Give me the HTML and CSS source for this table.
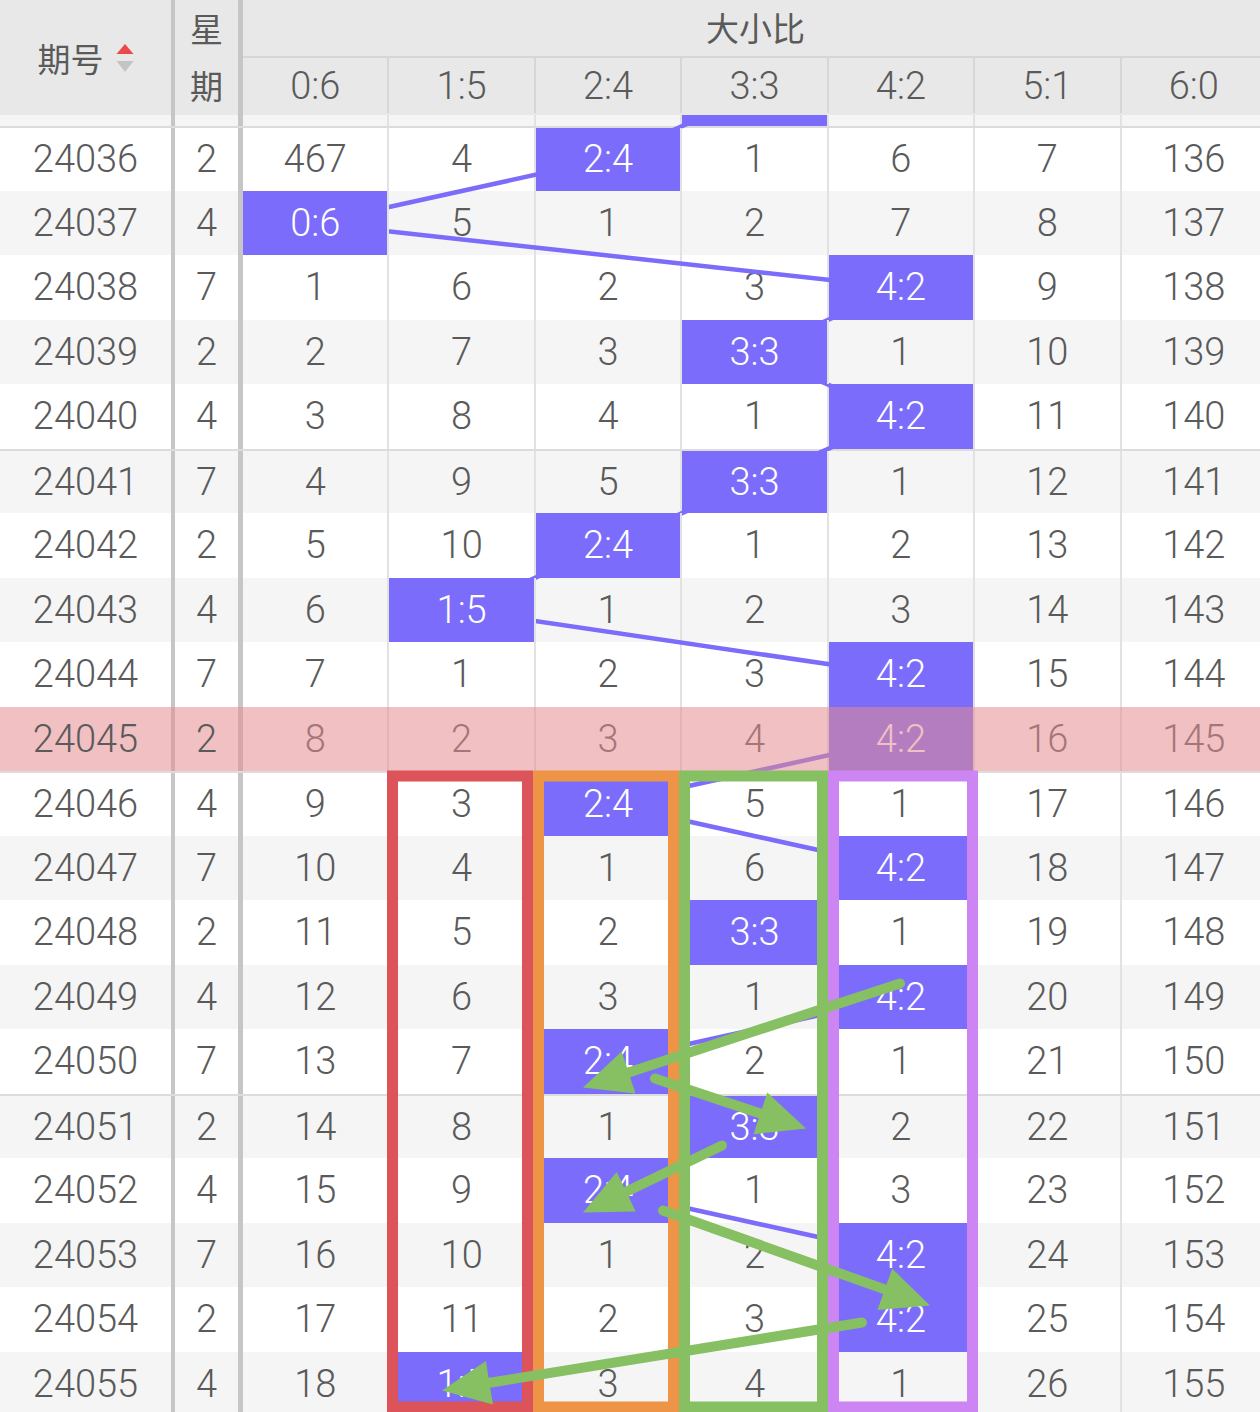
FILE: index.html
```html
<!DOCTYPE html>
<html lang="zh-CN">
<head>
<meta charset="utf-8">
<title>大小比走势</title>
<link rel="stylesheet" href="styles.css">
</head>
<body>
<div class="table">
  <div class="thead">
    <div class="h-qh">
      <span>期号</span>
      <svg class="sort" width="18" height="30" viewBox="0 0 18 30"><polygon points="9,0 17.5,10 0.5,10" fill="#ec4a4a"/><polygon points="0.5,17 17.5,17 9,28" fill="#c4c4c4"/></svg>
    </div>
    <div class="h-xq"><span>星</span><span>期</span></div>
    <div class="h-data">
      <div class="h-group">大小比</div>
      <div class="h-cols">
        <div>0:6</div><div>1:5</div><div>2:4</div><div>3:3</div><div>4:2</div><div>5:1</div><div>6:0</div>
      </div>
    </div>
  </div>
  <div class="tbody">
    <div class="rows">
      <svg class="lines" width="1268" height="1354.5" viewBox="0 61.5 1268 1354.5">
        <polyline fill="none" stroke="#7b6cfb" stroke-width="4.5" stroke-linejoin="round" points="754.5,93.75 608.1,158.25 315.2,222.75 900.9,287.25 754.5,351.75 900.9,416.25 754.5,480.75 608.1,545.25 461.6,609.75 900.9,674.25 900.9,738.75 608.1,803.25 900.9,867.75 754.5,932.25 900.9,996.75 608.1,1061.25 754.5,1125.75 608.1,1190.25 900.9,1254.75 900.9,1319.25 461.6,1383.75"/>
      </svg>

      <div class="row alt"><div class="c qh"></div><div class="c xq"></div><div class="c d"></div><div class="c d"></div><div class="c d"></div><div class="c d hit"></div><div class="c d"></div><div class="c d"></div><div class="c d"></div></div>
      <div class="row grp"><div class="c qh"><span>24036</span></div><div class="c xq"><span>2</span></div><div class="c d">467</div><div class="c d">4</div><div class="c d hit">2:4</div><div class="c d">1</div><div class="c d">6</div><div class="c d">7</div><div class="c d">136</div></div>
      <div class="row alt"><div class="c qh"><span>24037</span></div><div class="c xq"><span>4</span></div><div class="c d hit">0:6</div><div class="c d">5</div><div class="c d">1</div><div class="c d">2</div><div class="c d">7</div><div class="c d">8</div><div class="c d">137</div></div>
      <div class="row"><div class="c qh"><span>24038</span></div><div class="c xq"><span>7</span></div><div class="c d">1</div><div class="c d">6</div><div class="c d">2</div><div class="c d">3</div><div class="c d hit">4:2</div><div class="c d">9</div><div class="c d">138</div></div>
      <div class="row alt"><div class="c qh"><span>24039</span></div><div class="c xq"><span>2</span></div><div class="c d">2</div><div class="c d">7</div><div class="c d">3</div><div class="c d hit">3:3</div><div class="c d">1</div><div class="c d">10</div><div class="c d">139</div></div>
      <div class="row"><div class="c qh"><span>24040</span></div><div class="c xq"><span>4</span></div><div class="c d">3</div><div class="c d">8</div><div class="c d">4</div><div class="c d">1</div><div class="c d hit">4:2</div><div class="c d">11</div><div class="c d">140</div></div>
      <div class="row alt grp"><div class="c qh"><span>24041</span></div><div class="c xq"><span>7</span></div><div class="c d">4</div><div class="c d">9</div><div class="c d">5</div><div class="c d hit">3:3</div><div class="c d">1</div><div class="c d">12</div><div class="c d">141</div></div>
      <div class="row"><div class="c qh"><span>24042</span></div><div class="c xq"><span>2</span></div><div class="c d">5</div><div class="c d">10</div><div class="c d hit">2:4</div><div class="c d">1</div><div class="c d">2</div><div class="c d">13</div><div class="c d">142</div></div>
      <div class="row alt"><div class="c qh"><span>24043</span></div><div class="c xq"><span>4</span></div><div class="c d">6</div><div class="c d hit">1:5</div><div class="c d">1</div><div class="c d">2</div><div class="c d">3</div><div class="c d">14</div><div class="c d">143</div></div>
      <div class="row"><div class="c qh"><span>24044</span></div><div class="c xq"><span>7</span></div><div class="c d">7</div><div class="c d">1</div><div class="c d">2</div><div class="c d">3</div><div class="c d hit">4:2</div><div class="c d">15</div><div class="c d">144</div></div>
      <div class="row hl"><div class="c qh"><span>24045</span></div><div class="c xq"><span>2</span></div><div class="c d">8</div><div class="c d">2</div><div class="c d">3</div><div class="c d">4</div><div class="c d hit">4:2</div><div class="c d">16</div><div class="c d">145</div></div>
      <div class="row grp"><div class="c qh"><span>24046</span></div><div class="c xq"><span>4</span></div><div class="c d">9</div><div class="c d">3</div><div class="c d hit">2:4</div><div class="c d">5</div><div class="c d">1</div><div class="c d">17</div><div class="c d">146</div></div>
      <div class="row alt"><div class="c qh"><span>24047</span></div><div class="c xq"><span>7</span></div><div class="c d">10</div><div class="c d">4</div><div class="c d">1</div><div class="c d">6</div><div class="c d hit">4:2</div><div class="c d">18</div><div class="c d">147</div></div>
      <div class="row"><div class="c qh"><span>24048</span></div><div class="c xq"><span>2</span></div><div class="c d">11</div><div class="c d">5</div><div class="c d">2</div><div class="c d hit">3:3</div><div class="c d">1</div><div class="c d">19</div><div class="c d">148</div></div>
      <div class="row alt"><div class="c qh"><span>24049</span></div><div class="c xq"><span>4</span></div><div class="c d">12</div><div class="c d">6</div><div class="c d">3</div><div class="c d">1</div><div class="c d hit">4:2</div><div class="c d">20</div><div class="c d">149</div></div>
      <div class="row"><div class="c qh"><span>24050</span></div><div class="c xq"><span>7</span></div><div class="c d">13</div><div class="c d">7</div><div class="c d hit">2:4</div><div class="c d">2</div><div class="c d">1</div><div class="c d">21</div><div class="c d">150</div></div>
      <div class="row alt grp"><div class="c qh"><span>24051</span></div><div class="c xq"><span>2</span></div><div class="c d">14</div><div class="c d">8</div><div class="c d">1</div><div class="c d hit">3:3</div><div class="c d">2</div><div class="c d">22</div><div class="c d">151</div></div>
      <div class="row"><div class="c qh"><span>24052</span></div><div class="c xq"><span>4</span></div><div class="c d">15</div><div class="c d">9</div><div class="c d hit">2:4</div><div class="c d">1</div><div class="c d">3</div><div class="c d">23</div><div class="c d">152</div></div>
      <div class="row alt"><div class="c qh"><span>24053</span></div><div class="c xq"><span>7</span></div><div class="c d">16</div><div class="c d">10</div><div class="c d">1</div><div class="c d">2</div><div class="c d hit">4:2</div><div class="c d">24</div><div class="c d">153</div></div>
      <div class="row"><div class="c qh"><span>24054</span></div><div class="c xq"><span>2</span></div><div class="c d">17</div><div class="c d">11</div><div class="c d">2</div><div class="c d">3</div><div class="c d hit">4:2</div><div class="c d">25</div><div class="c d">154</div></div>
      <div class="row alt"><div class="c qh"><span>24055</span></div><div class="c xq"><span>4</span></div><div class="c d">18</div><div class="c d hit">1:5</div><div class="c d">3</div><div class="c d">4</div><div class="c d">1</div><div class="c d">26</div><div class="c d">155</div></div>

      <svg class="marks" width="1268" height="1354.5" viewBox="0 61.5 1268 1354.5">
        <g fill="none" stroke-width="11">
          <rect x="392.5" y="775.5" width="135" height="631" stroke="#dc535a"/>
          <rect x="538.5" y="775.5" width="135" height="631" stroke="#ee9447"/>
          <rect x="684.5" y="775.5" width="138" height="631" stroke="#86c062"/>
          <rect x="833.5" y="775.5" width="139" height="631" stroke="#cd85f4"/>
        </g>
        <g stroke="#86c062" stroke-width="10" stroke-linecap="round" fill="none">
          <line x1="900" y1="983" x2="628.6" y2="1072"/>
          <line x1="655" y1="1078" x2="760.4" y2="1112.9"/>
          <line x1="722" y1="1145" x2="626.2" y2="1191.2"/>
          <line x1="663" y1="1210" x2="884.8" y2="1288.9"/>
          <line x1="862" y1="1322" x2="489.4" y2="1382.3"/>
        </g>
        <g fill="#86c062">
          <polygon points="583,1087 621.7,1051.1 635.5,1092.9"/>
          <polygon points="806,1128 753.5,1133.8 767.3,1092"/>
          <polygon points="583,1212 616.7,1171.4 635.7,1211"/>
          <polygon points="930,1305 877.4,1309.6 892.2,1268.2"/>
          <polygon points="442,1390 485.9,1360.6 492.9,1404"/>
        </g>
      </svg>
    </div>
  </div>
</div>
</body>
</html>
```

FILE: styles.css
```css
html, body {
  margin: 0;
  padding: 0;
  background: #ffffff;
}

body {
  width: 1260px;
  height: 1412px;
  overflow: hidden;
  font-family: Roboto, "Noto Sans CJK SC", sans-serif;
  font-weight: 300;
  color: #5a5a5a;
}

.table {
  width: 1268px;
}

.thead {
  display: grid;
  grid-template-columns: 175px 68px 1025px;
  height: 115px;
  background: #e8e8e8;
  position: relative;
  z-index: 10;
}

.h-qh {
  border-right: 4.5px solid #c6c6c6;
  display: flex;
  align-items: center;
  justify-content: center;
  gap: 12px;
  font-size: 33px;
  font-weight: 400;
  font-family: "Noto Sans CJK SC", sans-serif;
}

.sort {
  display: block;
  margin-top: 2px;
}

.h-xq {
  border-right: 5px solid #c6c6c6;
  display: flex;
  flex-direction: column;
  align-items: center;
  justify-content: flex-start;
  font-size: 33px;
  font-weight: 400;
  line-height: 57px;
  font-family: "Noto Sans CJK SC", sans-serif;
}

.h-data {
  display: flex;
  flex-direction: column;
}

.h-group {
  height: 58px;
  border-bottom: 2px solid #d6d6d6;
  display: flex;
  align-items: center;
  justify-content: center;
  padding-bottom: 2px;
  box-sizing: border-box;
  font-size: 33px;
  font-weight: 400;
  font-family: "Noto Sans CJK SC", sans-serif;
}

.h-cols {
  display: grid;
  grid-template-columns: repeat(7, 146.43px);
  height: 55px;
}

.h-cols div {
  border-right: 2px solid #d6d6d6;
  display: flex;
  align-items: center;
  justify-content: center;
  font-size: 38px;
}

.tbody {
  height: 1297px;
  overflow: hidden;
  position: relative;
}

.rows {
  position: relative;
  z-index: 0;
  margin-top: -53.5px;
}

.row {
  display: grid;
  grid-template-columns: 175px 68px repeat(7, 146.43px);
  height: 64.5px;
  box-sizing: border-box;
  background: #ffffff;
  font-size: 38px;
}

.row.alt {
  background: #f5f5f5;
}

.row.grp {
  border-top: 2px solid #dcdcdc;
}

.c {
  display: flex;
  align-items: center;
  justify-content: center;
}

.qh {
  border-right: 4.5px solid #c6c6c6;
}

.xq {
  border-right: 5px solid #c6c6c6;
}

.d {
  border-right: 2px solid #e2e2e2;
}

.hit {
  background: #7b6cfb;
  color: #ffffff;
  position: relative;
  z-index: 2;
}

.row.hl {
  position: relative;
}

.row.hl::after {
  content: "";
  position: absolute;
  left: 0;
  top: 0;
  right: 0;
  bottom: 0;
  background: rgba(228, 140, 143, 0.545);
  z-index: 3;
}

.row.hl .qh span,
.row.hl .xq span {
  position: relative;
  z-index: 4;
}

.lines {
  position: absolute;
  left: 0;
  top: 0;
  z-index: 1;
}

.marks {
  position: absolute;
  left: 0;
  top: 0;
  z-index: 5;
}
```
